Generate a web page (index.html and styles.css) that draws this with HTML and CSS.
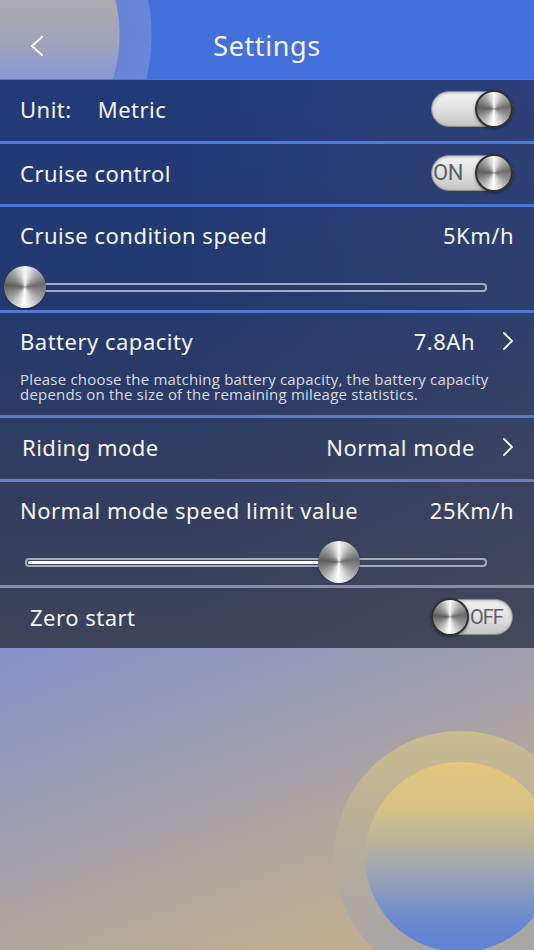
FILE: index.html
```html
<!DOCTYPE html>
<html lang="en">
<head>
    <meta charset="UTF-8">
    <meta name="viewport" content="width=device-width, initial-scale=1.0">
    <title>Settings</title>
    <link rel="stylesheet" href="styles.css">
</head>
<body>
    <div class="screen">
        <header class="topbar">
            <button class="back" aria-label="Back">
                <svg width="16" height="22" viewBox="0 0 16 22"><polyline points="13,2 3,11 13,20" fill="none" stroke="#fff" stroke-width="2" stroke-linecap="round" stroke-linejoin="round"/></svg>
            </button>
            <h1 class="title">Settings</h1>
        </header>

        <div class="list">
            <div class="row">
                <span class="label">Unit:</span>
                <span class="label unit-value">Metric</span>
                <div class="toggle on">
                    <span class="knob"></span>
                </div>
            </div>

            <div class="row">
                <span class="label">Cruise control</span>
                <div class="toggle on">
                    <span class="toggle-text">ON</span>
                    <span class="knob"></span>
                </div>
            </div>

            <div class="row tall">
                <div class="row-head">
                    <span class="label">Cruise condition speed</span>
                    <span class="value">5Km/h</span>
                </div>
                <div class="slider">
                    <div class="track"><div class="fill" style="width: 0%"></div></div>
                    <span class="knob slider-knob" style="left: 0%"></span>
                </div>
            </div>

            <div class="row tall">
                <div class="row-head">
                    <span class="label">Battery capacity</span>
                    <span class="value">7.8Ah <svg class="chev" width="12" height="20" viewBox="0 0 12 20"><polyline points="2,2 10,10 2,18" fill="none" stroke="#fff" stroke-width="1.8" stroke-linecap="round" stroke-linejoin="round"/></svg></span>
                </div>
                <p class="hint">Please choose the matching battery capacity, the battery capacity depends on the size of the remaining mileage statistics.</p>
            </div>

            <div class="row">
                <span class="label indent-1">Riding mode</span>
                <span class="value">Normal mode <svg class="chev" width="12" height="20" viewBox="0 0 12 20"><polyline points="2,2 10,10 2,18" fill="none" stroke="#fff" stroke-width="1.8" stroke-linecap="round" stroke-linejoin="round"/></svg></span>
            </div>

            <div class="row tall">
                <div class="row-head">
                    <span class="label">Normal mode speed limit value</span>
                    <span class="value">25Km/h</span>
                </div>
                <div class="slider">
                    <div class="track"><div class="fill" style="width: 68%"></div></div>
                    <span class="knob slider-knob" style="left: 68%"></span>
                </div>
            </div>

            <div class="row">
                <span class="label indent-2">Zero start</span>
                <div class="toggle off">
                    <span class="knob"></span>
                    <span class="toggle-text">OFF</span>
                </div>
            </div>
        </div>

        <div class="backdrop">
            <div class="orb"><div class="orb-core"></div></div>
        </div>
    </div>
</body>
</html>
```

FILE: styles.css
```css
* {
    box-sizing: border-box;
}
body {
    margin: 0;
    font-family: "Noto Sans", Roboto, sans-serif;
    color: #f4f5f8;
}
.screen {
    width: 534px;
    height: 950px;
    display: flex;
    flex-direction: column;
    overflow: hidden;
}

/* header with the pale disc in the corner */
.topbar {
    height: 80px;
    display: flex;
    align-items: center;
    position: relative;
    padding-top: 12px;
    background:
        radial-gradient(circle at -30px 35px, transparent 149px, #6784d6 150px, #6a88da 181px, #4470dc 182px),
        linear-gradient(180deg, #adaab0, #a0a3bc 55%, #8798d4);
    border-bottom: 1px solid #4a78e4;
}
.back {
    width: 40px;
    height: 40px;
    margin-left: 17px;
    padding: 0;
    border: none;
    background: none;
    display: flex;
    align-items: center;
    justify-content: center;
}
.title {
    position: absolute;
    left: 0;
    right: 0;
    top: 0;
    bottom: 0;
    margin: 0;
    display: flex;
    align-items: center;
    justify-content: center;
    font-size: 27px;
    font-weight: 400;
    letter-spacing: 0.6px;
    pointer-events: none;
    padding-top: 11px;
}

/* settings list */
.list {
    background:
        linear-gradient(90deg, rgba(120, 110, 100, 0) 35%, rgba(120, 110, 100, 0.12) 100%),
        linear-gradient(180deg, #22397a 0%, #24396f 40%, #303c62 65%, #3e4358 100%);
}
.row {
    height: 64px;
    display: flex;
    align-items: center;
    padding: 0 20px 3px;
    border-bottom: 3px solid #4e79dd;
}
.row:nth-child(1) { height: 64px; }
.row:nth-child(2) { height: 63px; border-color: #4d77d9; }
.row:nth-child(3) { height: 106px; border-color: #5179d2; }
.row:nth-child(4) { height: 105px; border-color: #5b79c6; }
.row:nth-child(5) { height: 64px; border-color: #6880c0; }
.row:nth-child(6) { height: 106px; border-color: #868daa; }
.row:nth-child(7) { height: 60px; border-bottom: none; }

.row.tall {
    flex-direction: column;
    align-items: stretch;
    justify-content: flex-start;
    padding: 16px 20px 0;
}
.row-head {
    display: flex;
    align-items: center;
    justify-content: space-between;
    height: 24px;
}
.label,
.value {
    font-size: 22px;
    line-height: 24px;
    letter-spacing: 0.5px;
}
.unit-value {
    margin-left: 26px;
}
.indent-1 {
    margin-left: 2px;
}
.indent-2 {
    margin-left: 10px;
}
.value {
    margin-left: auto;
    display: flex;
    align-items: center;
}
.chev {
    margin-left: 27px;
    margin-right: 0;
}
.hint {
    margin: 19px 0 0;
    font-family: "Open Sans", "Noto Sans", sans-serif;
    font-size: 15px;
    line-height: 15px;
    letter-spacing: 0.2px;
    color: #d9dce6;
}

/* metal knob shared by toggles and sliders */
.knob {
    width: 38px;
    height: 38px;
    border-radius: 50%;
    border: 2px solid #2f3034;
    background:
        radial-gradient(circle, rgba(255,255,255,0.15) 0 2px, transparent 3px),
        conic-gradient(#fafafa 0deg, #b8b8b8 35deg, #6c6c6c 80deg, #9a9a9a 120deg, #f4f4f4 175deg, #ffffff 185deg, #a6a6a6 230deg, #5e5e5e 275deg, #a4a4a4 320deg, #fafafa 360deg);
    box-shadow: 0 1px 3px rgba(0,0,0,0.45);
    flex-shrink: 0;
}

.toggle {
    margin-left: auto;
    margin-right: 1px;
    width: 82px;
    height: 36px;
    border-radius: 18px;
    background: linear-gradient(180deg, #f4f4f4, #dcdcdc 60%, #c4c4c4);
    border: 1px solid #8b8d93;
    box-shadow: inset 0 1px 3px rgba(0,0,0,0.25);
    display: flex;
    align-items: center;
}
.toggle.on {
    justify-content: flex-end;
}
.toggle.on .knob {
    margin-right: -1px;
}
.toggle.off .knob {
    margin-left: -1px;
}
.toggle-text {
    font-family: Roboto, "Noto Sans", sans-serif;
    font-size: 22px;
    color: #5d5f66;
    letter-spacing: -0.5px;
}
.toggle.on .toggle-text {
    margin-right: auto;
    margin-left: 1px;
}
.toggle.off .toggle-text {
    margin-left: 1px;
    font-size: 20px;
    letter-spacing: -1px;
}

/* sliders */
.slider {
    position: relative;
    margin: 19px 27px 0 5px;
    height: 42px;
    display: flex;
    align-items: center;
}
.track {
    width: 100%;
    height: 9px;
    border: 2px solid #a4a9bd;
    border-radius: 4px;
    padding: 1px;
}
.fill {
    height: 100%;
    background: #fbfbfb;
    border-radius: 2px;
}
.slider-knob {
    position: absolute;
    top: 0;
    width: 42px;
    height: 42px;
    margin-left: -21px;
    border: none;
    box-shadow: 0 1px 2px rgba(0,0,0,0.35);
}

/* lower background with the sun disc */
.backdrop {
    flex: 1;
    overflow: hidden;
    padding: 83px 0 0 334px;
    background: linear-gradient(160deg, #8591c8 0%, #9d9db2 35%, #b5aa98 68%, #c8b18c 100%);
}
.orb {
    width: 252px;
    height: 252px;
    border-radius: 50%;
    padding: 31px;
    background: linear-gradient(180deg, #cabb90 0%, #b7ae98 40%, #a3a4ac 100%);
}
.orb-core {
    width: 190px;
    height: 190px;
    border-radius: 50%;
    background: linear-gradient(180deg, #e6c77c 0%, #d4c186 25%, #a2a8b0 55%, #6a88d0 85%, #5f82d6 100%);
}
```
